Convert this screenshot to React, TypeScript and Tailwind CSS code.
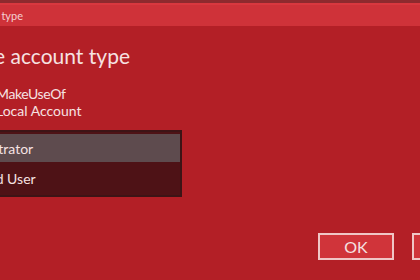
export default function App() {
  const font = { fontFamily: 'Lato, "Open Sans", sans-serif' };
  return (
    <div
      className="w-[420px] h-[280px] overflow-hidden bg-[#b31f26] text-[#f6e2e2] flex flex-col"
      style={font}
    >
      <div className="h-[3px] bg-[#8e2a2e] shrink-0" />
      <div className="h-[23px] shrink-0 bg-[#cf3239] border-t-2 border-[#d9383f] flex items-center">
        <div className="w-[23px] flex justify-end whitespace-nowrap text-[11px] leading-[16px] text-[#f3d0d2]">
          Change account type
        </div>
      </div>
      <div className="mt-[16px] w-[130px] flex justify-end whitespace-nowrap text-[21px] leading-[28px]">
        Change account type
      </div>
      <div className="mt-[15px] ml-[-4px] flex flex-col text-[14px] leading-[17px] whitespace-nowrap">
        <span className="tracking-[-0.4px]">MakeUseOf</span>
        <span>Local Account</span>
      </div>
      <div className="mt-[11px] ml-[-67px] w-[249px] border-2 border-[#3d1416] bg-[#4e1216] pt-[2px] flex flex-col text-[14px]">
        <div className="h-[28px] bg-[#5e4b4e] flex items-center pl-[14px] whitespace-nowrap">
          Administrator
        </div>
        <div className="h-[33px] flex items-center pl-[14px] whitespace-nowrap">
          Standard User
        </div>
      </div>
      <div className="mt-[36px] ml-[318px] flex gap-[18px]">
        <button className="w-[76px] h-[27px] shrink-0 border-2 border-[#f0c6c6] bg-[#d0343a] text-[16px] leading-none flex items-center justify-center text-[#f6e2e2]">
          OK
        </button>
        <button className="w-[76px] h-[27px] shrink-0 border-2 border-[#f0c6c6] bg-[#d0343a] text-[16px] leading-none flex items-center justify-center text-[#f6e2e2]">
          Cancel
        </button>
      </div>
    </div>
  );
}
